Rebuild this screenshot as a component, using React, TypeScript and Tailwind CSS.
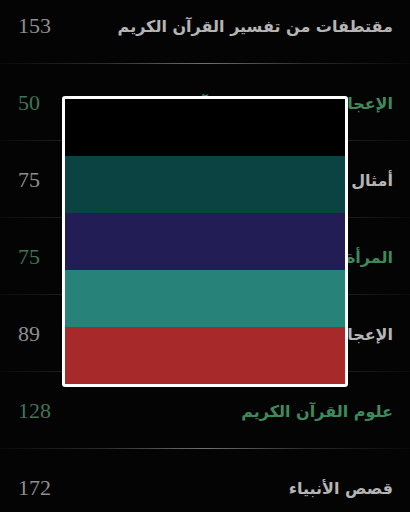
const rows = [
  { n: 153, t: 'مقتطفات من تفسير القرآن الكريم', green: false },
  { n: 50, t: 'الإعجاز العلمي في القرآن الكريم', green: true },
  { n: 75, t: 'أمثال القرآن الكريم', green: false },
  { n: 75, t: 'المرأة في القرآن الكريم', green: true },
  { n: 89, t: 'الإعجاز البياني في القرآن', green: false },
  { n: 128, t: 'علوم القرآن الكريم', green: true },
  { n: 172, t: 'قصص الأنبياء', green: false },
]

const stripes = ['bg-[#000000]', 'bg-[#0b4242]', 'bg-[#231d56]', 'bg-[#27827a]', 'bg-[#a8292a]']

export default function App() {
  return (
    <div className="relative w-[410px] h-[512px] overflow-hidden bg-[#040404]">
      {/* list */}
      <div className="-mt-[13px] flex flex-col">
        {rows.map((r, i) => (
          <div key={i} className="flex flex-col">
            <div className="h-[76px] flex items-center justify-between pl-[18px] pr-[17px]">
              <span
                className={`font-['Liberation_Serif',serif] text-[22px] ${r.green ? 'text-[#3f7555]' : 'text-[#8f8f8f]'}`}
              >
                {r.n}
              </span>
              <span
                dir="rtl"
                className={`font-['DejaVu_Sans',sans-serif] font-bold text-[16px] mt-[3px] ${r.green ? 'text-[#3e8a5b]' : 'text-[#b5b5b5]'}`}
              >
                {r.t}
              </span>
            </div>
            {i < rows.length - 1 && (
              <div className="h-px bg-[linear-gradient(90deg,#0a0a0a_0%,#2a2a2a_25%,#707070_50%,#2a2a2a_75%,#0a0a0a_100%)]" />
            )}
          </div>
        ))}
      </div>

      {/* colour picker overlay */}
      <div className="absolute left-[62px] top-[96px] w-[286px] h-[291px] border-[3px] border-white rounded-[3px] bg-black flex flex-col">
        {stripes.map((c, i) => (
          <div key={i} className={`flex-1 ${c}`} />
        ))}
      </div>
    </div>
  )
}
